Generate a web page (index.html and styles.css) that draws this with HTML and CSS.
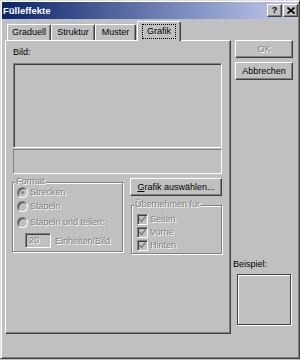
FILE: index.html
```html
<!DOCTYPE html>
<html lang="de">
<head>
  <meta charset="UTF-8" />
  <title>Fülleffekte</title>
  <link rel="stylesheet" href="styles.css">
</head>
<body>
  <div class="window">
    <div class="titlebar">
      <span class="title">Fülleffekte</span>
      <span class="tbtns">
        <span class="tbtn help">?</span>
        <span class="tbtn close">
          <svg width="8" height="7" viewBox="0 0 8 7"><path d="M0.5 0.5 L7.5 6.5 M7.5 0.5 L0.5 6.5" stroke="#000" stroke-width="1.6"/></svg>
        </span>
      </span>
    </div>

    <div class="client">
      <div class="sheet">
        <div class="tabs">
          <div class="tab t1">Graduell</div>
          <div class="tab t2">Struktur</div>
          <div class="tab t3">Muster</div>
          <div class="tab active"><span class="focus">Grafik</span></div>
        </div>

        <div class="panel">
          <div class="label">Bild:</div>
          <div class="picture"></div>
          <div class="namebox"></div>

          <div class="row">
            <div class="group format">
              <span class="legend off">Format</span>
              <div class="opt first"><span class="radio on"></span><span class="off">Strecken</span></div>
              <div class="opt"><span class="radio"></span><span class="off">Stapeln</span></div>
              <div class="opt third"><span class="radio"></span><span class="off">Stapeln und teilen:</span></div>
              <div class="units">
                <span class="edit off">20</span>
                <span class="off">Einheiten/Bild</span>
              </div>
            </div>

            <div class="rightcol">
              <div class="btn wide"><u>G</u>rafik auswählen...</div>
              <div class="group apply">
                <span class="legend off">Übernehmen für</span>
                <div class="chk first"><span class="box"><svg width="9" height="9" viewBox="0 0 9 9"><path d="M1.5 4 L3.5 6.5 L7.5 1.5" fill="none" stroke="#808080" stroke-width="1.5"/></svg></span><span class="off">Seiten</span></div>
                <div class="chk"><span class="box"><svg width="9" height="9" viewBox="0 0 9 9"><path d="M1.5 4 L3.5 6.5 L7.5 1.5" fill="none" stroke="#808080" stroke-width="1.5"/></svg></span><span class="off">Vorne</span></div>
                <div class="chk"><span class="box"><svg width="9" height="9" viewBox="0 0 9 9"><path d="M1.5 4 L3.5 6.5 L7.5 1.5" fill="none" stroke="#808080" stroke-width="1.5"/></svg></span><span class="off">Hinten</span></div>
              </div>
            </div>
          </div>
        </div>
      </div>

      <div class="side">
        <div class="btn ok"><span class="off">OK</span></div>
        <div class="btn cancel">Abbrechen</div>
        <div class="label sample-label">Beispiel:</div>
        <div class="sample"></div>
      </div>
    </div>
  </div>
</body>
</html>
```

FILE: styles.css
```css
body {
  margin: 0;
  background-color: #c0c0c0;
  font-family: "Liberation Sans", Arial, sans-serif;
  font-size: 9px;
  color: #000;
}
.window {
  width: 300px;
  height: 359px;
  box-sizing: border-box;
  padding: 1px;
  border: 1px solid;
  border-color: #dfdfdf #404040 #404040 #dfdfdf;
  box-shadow: inset 1px 1px 0 #fff, inset -1px -1px 0 #808080;
  display: flex;
  flex-direction: column;
}
.titlebar {
  height: 17px;
  display: flex;
  align-items: center;
  justify-content: space-between;
  background: linear-gradient(to right, #0a246a, #a8b4dc 85%, #c4c8e0);
}
.title {
  color: #fff;
  font-weight: bold;
  font-size: 9.5px;
  padding-left: 1px;
}
.tbtns {
  display: flex;
  gap: 1px;
}
.tbtn {
  width: 13px;
  height: 11px;
  background-color: #c0c0c0;
  border: 1px solid;
  border-color: #fff #404040 #404040 #fff;
  box-shadow: inset -1px -1px 0 #808080;
  display: flex;
  align-items: center;
  justify-content: center;
  font-weight: bold;
  font-size: 9px;
  line-height: 11px;
}
.client {
  display: flex;
  padding: 2px 0 0 3px;
}
.sheet {
  width: 226px;
}
.tabs {
  height: 19px;
  display: flex;
  align-items: flex-end;
  padding-left: 2px;
}
.tab {
  height: 16px;
  box-sizing: border-box;
  border-top: 1px solid #fff;
  border-left: 1px solid #fff;
  border-right: 1px solid #404040;
  border-radius: 2px 2px 0 0;
  box-shadow: inset -1px 0 0 #808080;
  display: flex;
  align-items: center;
  justify-content: center;
  line-height: 11px;
}
.t1 { width: 44px; }
.t2 { width: 44px; }
.t3 { width: 41px; }
.active {
  width: 44px;
  height: 20px;
  margin-left: 1px;
  margin-bottom: -1px;
  position: relative;
  z-index: 1;
  background-color: #c0c0c0;
  padding-bottom: 1px;
}
.focus {
  outline: 1px dotted #000;
  padding: 1px 4px;
}
.panel {
  height: 294px;
  box-sizing: border-box;
  border: 1px solid;
  border-color: #fff #404040 #404040 #fff;
  box-shadow: inset -1px -1px 0 #808080;
  padding: 5px 8px 0 7px;
}
.label {
  line-height: 12px;
}
.picture {
  height: 85px;
  margin-top: 5px;
  box-sizing: border-box;
  border: 1px solid;
  border-color: #808080 #fff #fff #808080;
  box-shadow: inset 1px 1px 0 #404040;
}
.namebox {
  height: 25px;
  margin-top: 1px;
  box-sizing: border-box;
  border: 1px solid;
  border-color: #808080 #fff #fff #808080;
}
.row {
  display: flex;
  align-items: flex-start;
  margin-top: 4px;
}
.group {
  position: relative;
  box-sizing: border-box;
  border: 1px solid #808080;
  box-shadow: inset 1px 1px 0 #fff, 1px 1px 0 #fff;
}
.legend {
  position: absolute;
  top: -7px;
  left: 2px;
  padding: 0 1px;
  background-color: #c0c0c0;
  line-height: 11px;
}
.off {
  color: #808080;
  text-shadow: 1px 1px 0 #fff;
}
.format {
  width: 111px;
  height: 70px;
  margin: 4px 0 0 -1px;
  padding: 2px 0 0 4px;
}
.opt {
  height: 14px;
  display: flex;
  align-items: center;
  gap: 2px;
}
.opt.third {
  margin-top: 2px;
}
.radio {
  width: 11px;
  height: 11px;
  box-sizing: border-box;
  border-radius: 50%;
  border: 1px solid;
  border-color: #808080 #fff #fff #808080;
  box-shadow: inset 1px 1px 0 #404040;
  display: flex;
  align-items: center;
  justify-content: center;
}
.radio.on::after {
  content: "";
  width: 3px;
  height: 3px;
  border-radius: 50%;
  background-color: #808080;
}
.units {
  height: 15px;
  display: flex;
  align-items: center;
  gap: 4px;
  margin: 4px 0 0 8px;
}
.edit {
  width: 26px;
  height: 15px;
  box-sizing: border-box;
  border: 1px solid;
  border-color: #808080 #fff #fff #808080;
  box-shadow: inset 1px 1px 0 #404040;
  padding-left: 3px;
  line-height: 13px;
}
.rightcol {
  width: 92px;
  margin-left: 7px;
}
.btn {
  height: 18px;
  box-sizing: border-box;
  border: 1px solid;
  border-color: #fff #404040 #404040 #fff;
  box-shadow: inset -1px -1px 0 #808080;
  display: flex;
  align-items: center;
  justify-content: center;
  line-height: 11px;
}
.apply {
  width: 91px;
  height: 49px;
  margin: 9px 0 0 1px;
  padding: 7px 0 0 5px;
}
.chk {
  height: 12px;
  display: flex;
  align-items: center;
  gap: 2px;
  margin-bottom: 1px;
}
.box {
  width: 11px;
  height: 11px;
  box-sizing: border-box;
  border: 1px solid;
  border-color: #808080 #fff #fff #808080;
  box-shadow: inset 1px 1px 0 #404040;
  display: flex;
  align-items: center;
  justify-content: center;
}
.side {
  width: 58px;
  margin: 19px 0 0 4px;
}
.cancel {
  margin-top: 4px;
}
.sample-label {
  margin: 178px 0 0 -2px;
}
.sample {
  width: 54px;
  height: 51px;
  margin: 4px 0 0 2px;
  box-sizing: border-box;
  border: 1px solid #404040;
  box-shadow: 1px 1px 0 #fff, inset 1px 1px 0 #fff;
}
```
